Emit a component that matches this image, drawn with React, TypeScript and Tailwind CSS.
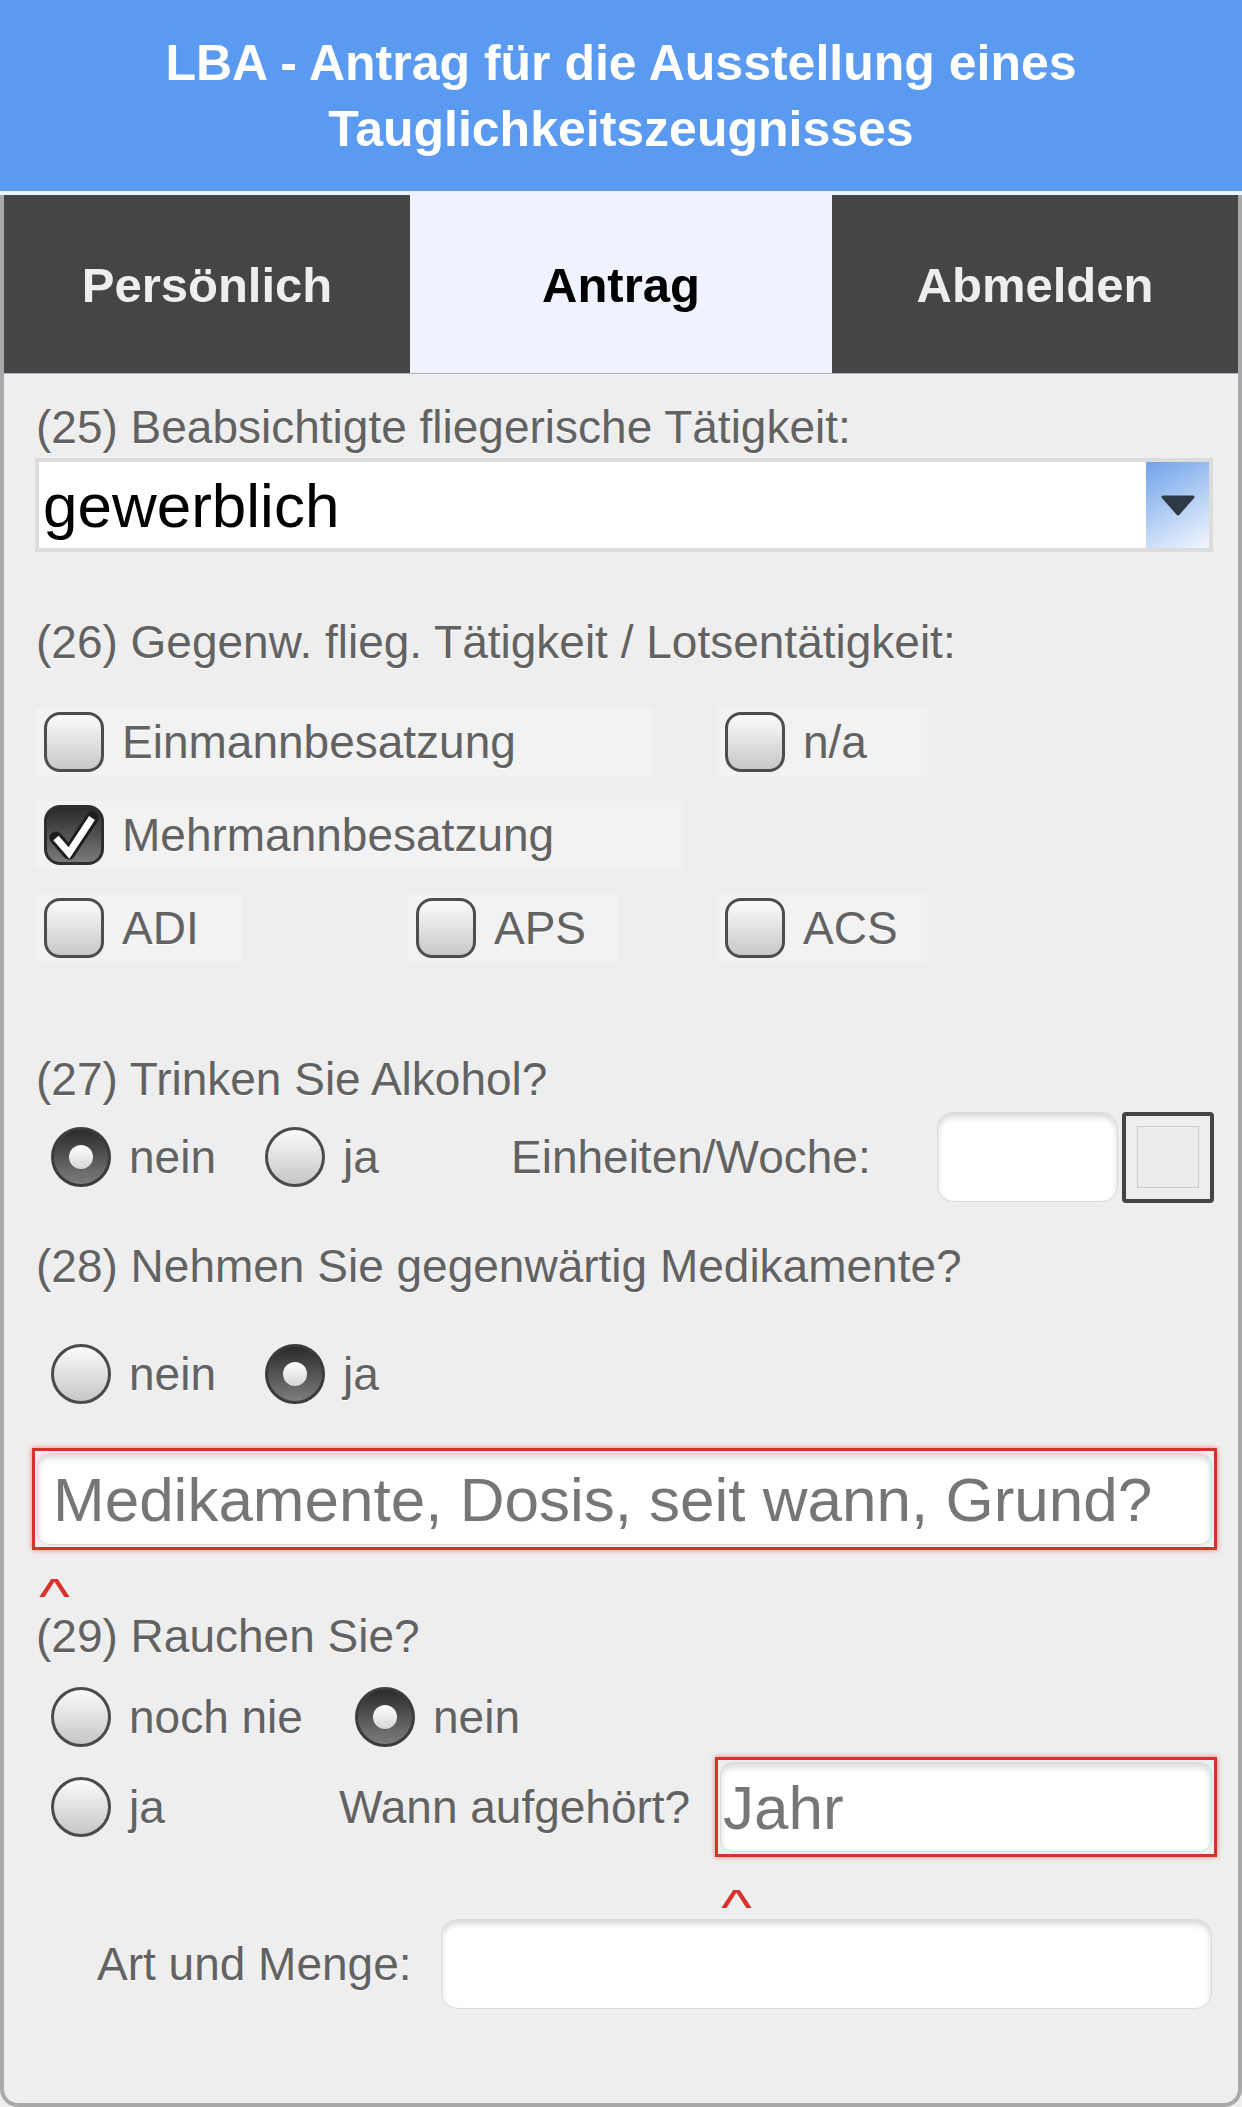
import React from "react";

const Radio = ({ on }: { on?: boolean }) => {
  return (
    <span
      className={
        on
          ? "w-[60px] h-[60px] shrink-0 rounded-full border-[3px] border-[#3c3c3c] bg-[linear-gradient(180deg,#2b2b2b,#7d7d7d)] flex items-center justify-center"
          : "w-[60px] h-[60px] shrink-0 rounded-full border-[3px] border-[#4a4a4a] bg-[linear-gradient(180deg,#fbfbfb,#c6c6c6)]"
      }
    >
      {on && (
        <span className="w-[24px] h-[24px] rounded-full bg-[linear-gradient(180deg,#ffffff,#d6d6d6)]" />
      )}
    </span>
  );
};

const Box = ({ on }: { on?: boolean }) => {
  if (!on) {
    return (
      <span className="w-[60px] h-[60px] shrink-0 rounded-[16px] border-[3px] border-[#4d4d4d] bg-[linear-gradient(180deg,#fbfbfb,#c8c8c8)]" />
    );
  }
  return (
    <span className="w-[60px] h-[60px] shrink-0 rounded-[16px] border-[3px] border-[#2e2e2e] bg-[linear-gradient(180deg,#2a2a2a,#7a7a7a)] flex items-center justify-center">
      <svg width="54" height="54" viewBox="0 0 54 54">
        <path d="M9 30 L22 45 L45 10" fill="none" stroke="#1e1e1e" strokeWidth="13" strokeLinejoin="round" strokeLinecap="round" />
        <path d="M9 30 L22 45 L45 10" fill="none" stroke="#ffffff" strokeWidth="7" strokeLinejoin="miter" strokeLinecap="butt" />
      </svg>
    </span>
  );
};

const CheckItem = ({ label, on, className }: { label: string; on?: boolean; className: string }) => {
  return (
    <div className={"flex items-center h-[68px] pl-[8px] bg-[#f2f2f2] shrink-0 " + className}>
      <Box on={on} />
      <span className="ml-[18px] whitespace-nowrap">{label}</span>
    </div>
  );
};

const RadioItem = ({ label, on, className }: { label: string; on?: boolean; className: string }) => {
  return (
    <div className={"flex items-center shrink-0 " + className}>
      <Radio on={on} />
      <span className="ml-[18px] whitespace-nowrap">{label}</span>
    </div>
  );
};

export default function App() {
  return (
    <div className="w-[1242px] min-h-[2107px] flex flex-col bg-[#eeeeee] [font-family:'Liberation_Sans',Arial,sans-serif]">
      {/* title bar */}
      <header className="h-[191px] bg-[#5b9af1] flex items-center justify-center px-[100px] text-center text-white font-bold text-[50px] leading-[66px]">
        LBA - Antrag für die Ausstellung eines Tauglichkeitszeugnisses
      </header>
      <div className="h-[4px] bg-[#eef3fb]" />

      <main className="flex-1 flex flex-col border-x-4 border-b-4 border-[#a9a9a9] rounded-b-[18px]">
        {/* tabs */}
        <nav className="flex h-[179px] border-b border-[#a7b3c6] text-[49px] font-bold">
          <div className="w-[406px] bg-[#454545] text-[#eeeeee] flex items-center justify-center pt-[4px]">Persönlich</div>
          <div className="flex-1 bg-[#eef3fd] text-black flex items-center justify-center pt-[4px]">Antrag</div>
          <div className="w-[406px] bg-[#454545] text-[#eeeeee] flex items-center justify-center pt-[4px]">Abmelden</div>
        </nav>

        <section className="flex flex-col pl-[32px] pr-[26px] pt-[23px] text-[46px] text-[#626262] [text-shadow:0_1px_0_#ffffff]">
          {/* (25) */}
          <div className="h-[60px] leading-[60px] whitespace-nowrap">(25) Beabsichtigte fliegerische Tätigkeit:</div>
          <div className="mt-[1px] -mx-[1px] h-[94px] flex border-[4px] border-[#dcdcdc]">
            <div className="flex-1 bg-white flex items-center pl-[4px] text-[62px] text-black [text-shadow:none]">gewerblich</div>
            <div className="w-[63px] bg-[linear-gradient(150deg,#6fa3ea,#f3f7fe)] flex items-center justify-center">
              <svg width="36" height="22" viewBox="0 0 36 22">
                <path d="M3 3 L33 3 L18 20 Z" fill="#2e3846" stroke="#2e3846" strokeWidth="3" strokeLinejoin="round" />
              </svg>
            </div>
          </div>

          {/* (26) */}
          <div className="mt-[60px] h-[60px] leading-[60px] whitespace-nowrap">(26) Gegenw. flieg. Tätigkeit / Lotsentätigkeit:</div>
          <div className="mt-[36px] flex">
            <CheckItem label="Einmannbesatzung" className="w-[617px]" />
            <CheckItem label="n/a" className="ml-[64px] w-[210px]" />
          </div>
          <div className="mt-[25px] flex">
            <CheckItem label="Mehrmannbesatzung" on className="w-[647px]" />
          </div>
          <div className="mt-[25px] flex">
            <CheckItem label="ADI" className="w-[206px]" />
            <CheckItem label="APS" className="ml-[166px] w-[210px]" />
            <CheckItem label="ACS" className="ml-[99px] w-[210px]" />
          </div>

          {/* (27) */}
          <div className="mt-[87px] h-[60px] leading-[60px] whitespace-nowrap">(27) Trinken Sie Alkohol?</div>
          <div className="mt-[3px] h-[90px] flex items-center pl-[15px]">
            <RadioItem label="nein" on className="w-[214px]" />
            <RadioItem label="ja" className="w-[246px]" />
            <span className="w-[426px] shrink-0 whitespace-nowrap">Einheiten/Woche:</span>
            <input
              readOnly
              className="w-[181px] h-[90px] shrink-0 rounded-[16px] bg-white border border-[#dadada] shadow-[inset_0_4px_6px_rgba(0,0,0,0.16)] outline-none"
            />
            <div className="ml-[4px] w-[92px] h-[91px] shrink-0 rounded-[4px] border-[4px] border-[#444444] flex items-center justify-center">
              <div className="w-[62px] h-[62px] border border-[#c9c9c9] bg-[#ededed]" />
            </div>
          </div>

          {/* (28) */}
          <div className="mt-[34px] h-[60px] leading-[60px] whitespace-nowrap">(28) Nehmen Sie gegenwärtig Medikamente?</div>
          <div className="mt-[33px] h-[90px] flex items-center pl-[15px]">
            <RadioItem label="nein" className="w-[214px]" />
            <RadioItem label="ja" on className="w-[246px]" />
          </div>
          <div className="mt-[29px] -ml-[4px] -mr-[5px] h-[102px] border-[3px] border-[#d6322b] shadow-[0_0_5px_rgba(214,50,43,0.6)] p-[2px]">
            <input
              readOnly
              placeholder="Medikamente, Dosis, seit wann, Grund?"
              className="w-full h-full rounded-[12px] bg-white border border-[#dadada] shadow-[inset_0_4px_6px_rgba(0,0,0,0.16)] pl-[15px] text-[62px] text-black placeholder:text-[#767676] outline-none"
            />
          </div>
          <div className="h-[56px] pt-[37px] flex items-start text-[#d8322c] text-[66px] [text-shadow:none]">
            <span className="ml-[3px] block leading-[24px] scale-y-75 origin-top">^</span>
          </div>

          {/* (29) */}
          <div className="h-[60px] leading-[60px] whitespace-nowrap">(29) Rauchen Sie?</div>
          <div className="mt-[11px] h-[80px] flex items-center pl-[15px]">
            <RadioItem label="noch nie" className="w-[304px]" />
            <RadioItem label="nein" on className="w-[240px]" />
          </div>
          <div className="h-[100px] flex items-center pl-[15px]">
            <RadioItem label="ja" className="w-[288px]" />
            <span className="w-[376px] shrink-0 whitespace-nowrap">Wann aufgehört?</span>
            <div className="flex-1 -mr-[5px] h-[100px] border-[3px] border-[#d6322b] shadow-[0_0_5px_rgba(214,50,43,0.6)] p-[2px]">
              <input
                readOnly
                placeholder="Jahr"
                className="w-full h-full rounded-[12px] bg-white border border-[#dadada] shadow-[inset_0_4px_6px_rgba(0,0,0,0.16)] pl-[2px] text-[62px] text-black placeholder:text-[#767676] outline-none"
              />
            </div>
          </div>
          <div className="h-[62px] pt-[41px] flex items-start text-[#d8322c] text-[66px] [text-shadow:none]">
            <span className="ml-[685px] block leading-[24px] scale-y-75 origin-top">^</span>
          </div>
          <div className="h-[90px] flex items-center">
            <span className="ml-[61px] whitespace-nowrap">Art und Menge:</span>
            <input
              readOnly
              className="ml-[29px] flex-1 h-[90px] rounded-[16px] bg-white border border-[#dadada] shadow-[inset_0_4px_6px_rgba(0,0,0,0.16)] outline-none"
            />
          </div>
        </section>
      </main>
    </div>
  );
}
